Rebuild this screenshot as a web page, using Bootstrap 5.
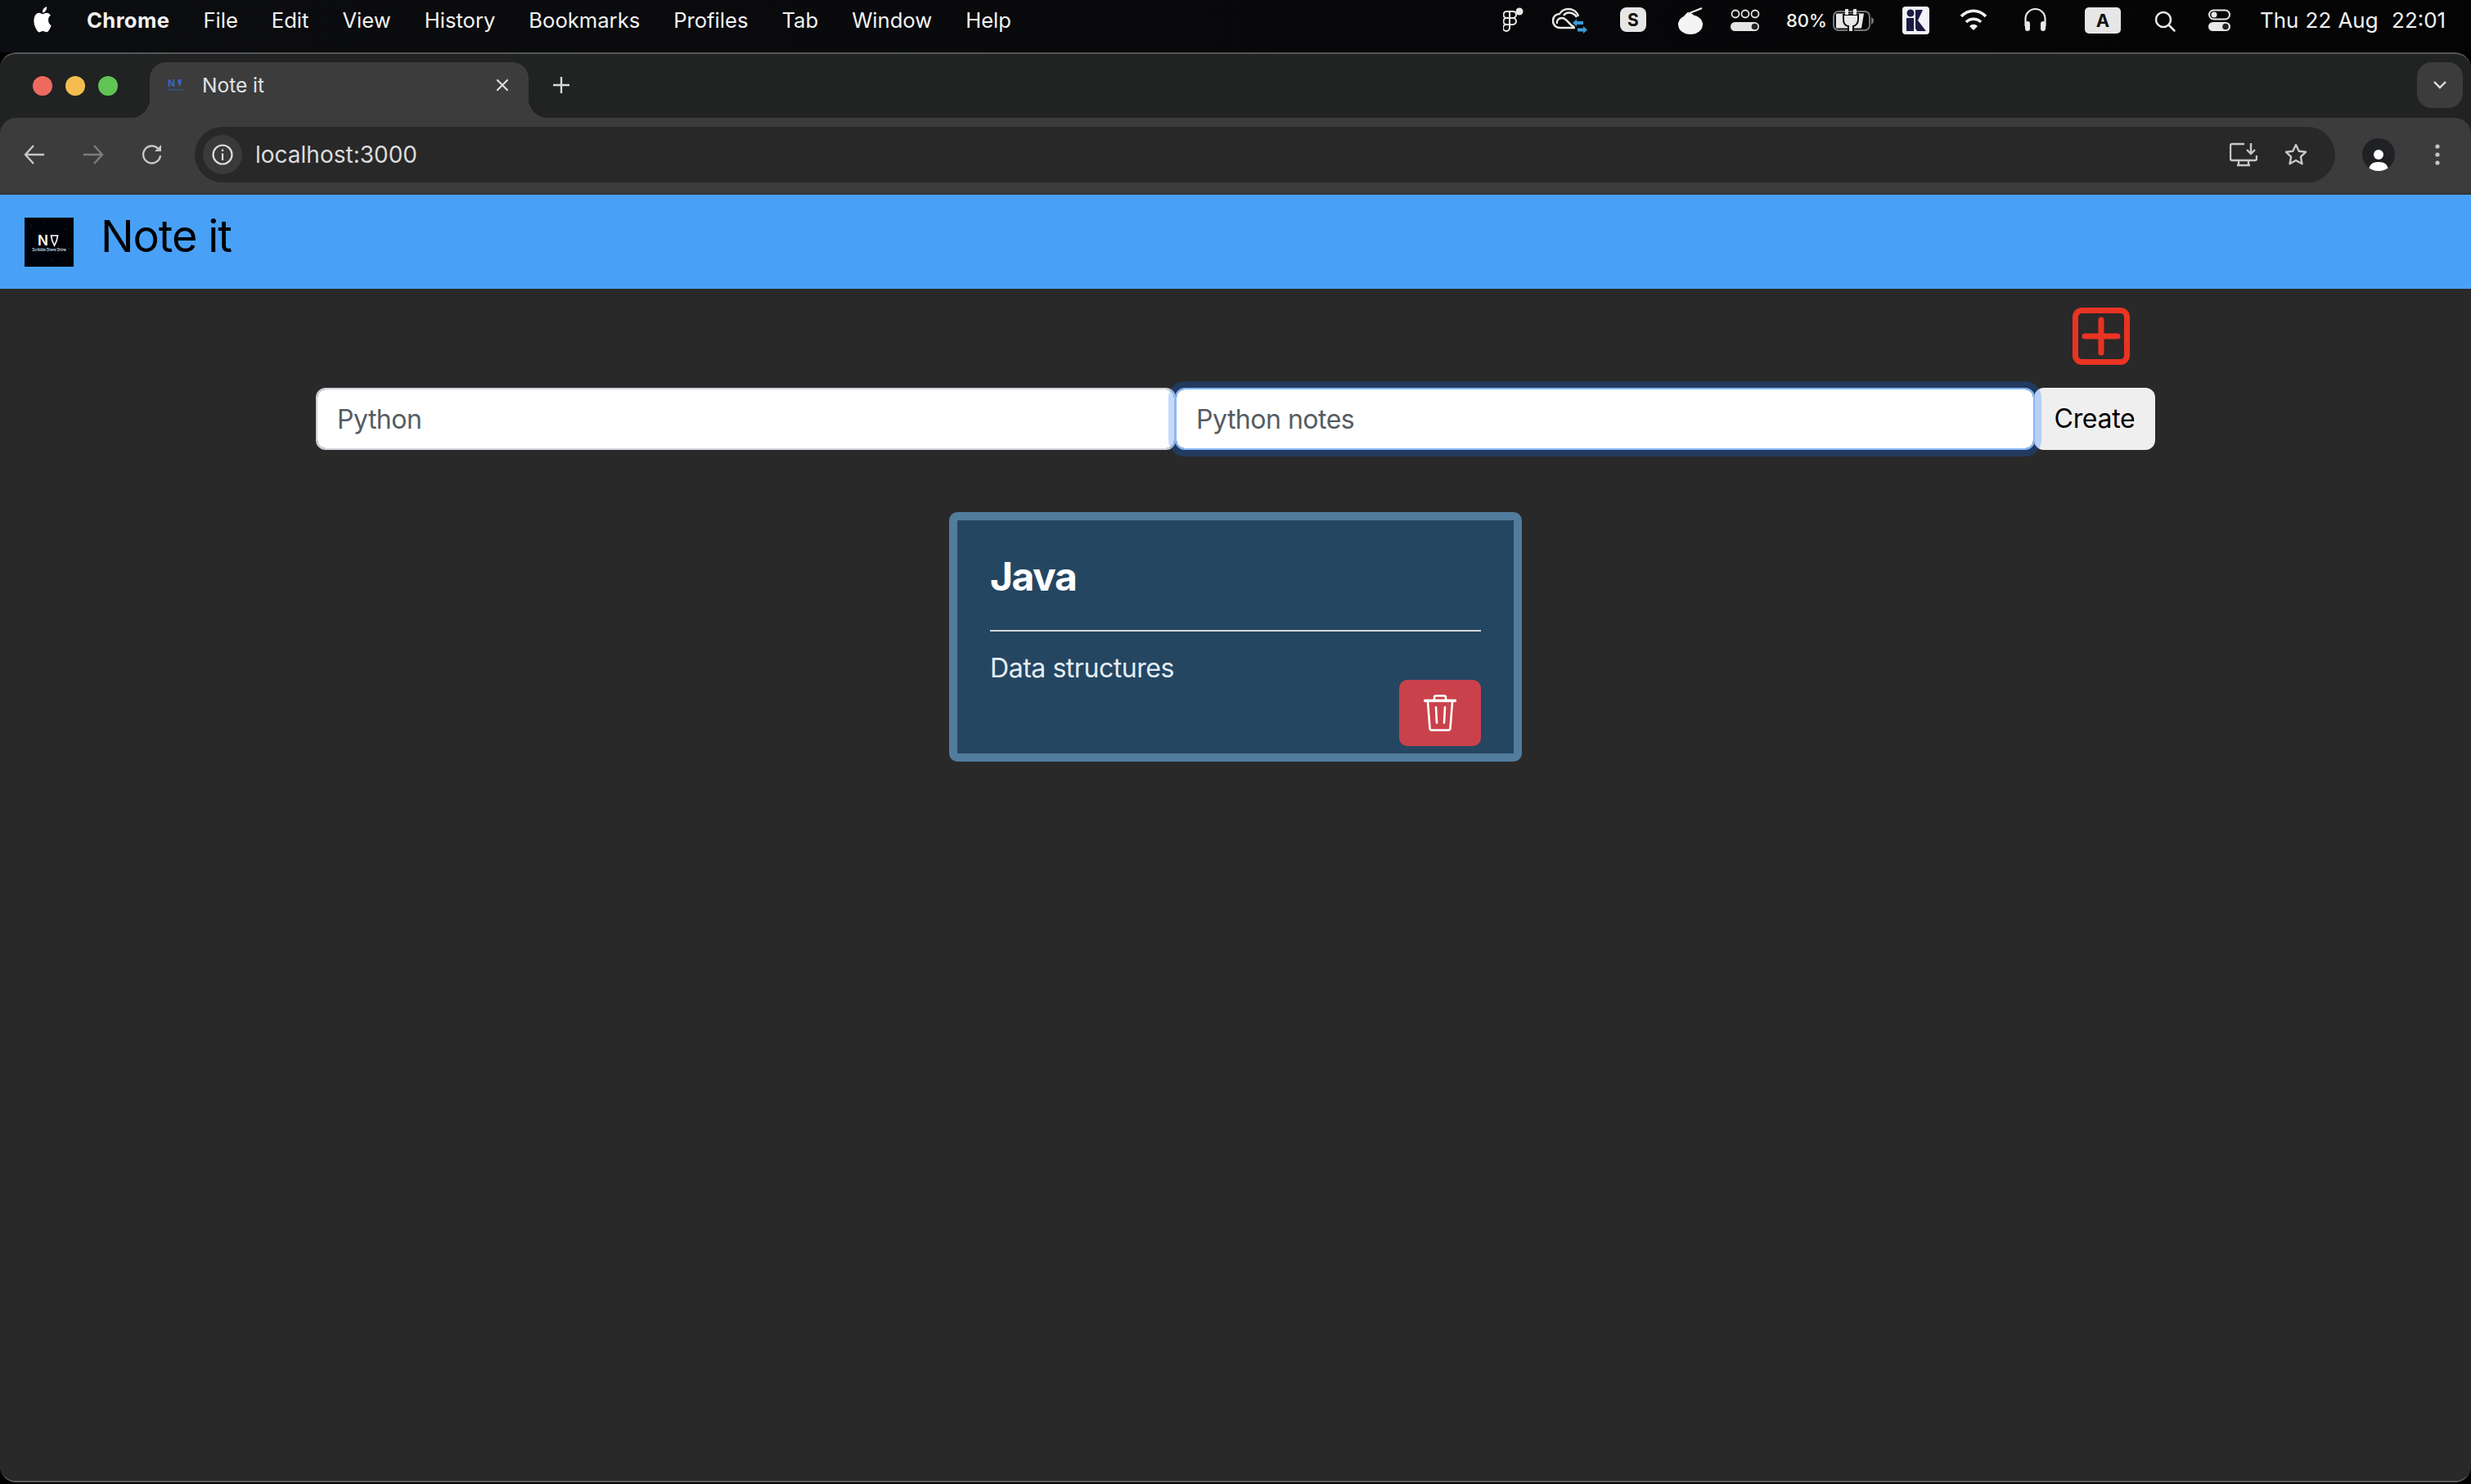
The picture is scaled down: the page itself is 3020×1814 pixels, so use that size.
<!DOCTYPE html>
<html lang="en">

<head>
  <meta charset="utf-8">
  <meta name="viewport" content="width=device-width, initial-scale=1">
  <title>Note it</title>
  <link href="https://cdn.jsdelivr.net/npm/bootstrap@5.3.0/dist/css/bootstrap.min.css" rel="stylesheet">
  <style>
    html, body { height: 100%; }
    body { background: #000; font-family: Inter, "Liberation Sans", sans-serif; overflow: hidden; }
    svg { display: block; flex-shrink: 0; }

    /* mac menu bar */
    .mac-bar { height: 64px; padding: 5px 31px 0 39px; background: linear-gradient(90deg, #0c0d10, #040405); color: #f2f2f2; font-size: 25.6px; line-height: 40px; }
    .mac-menu { gap: 41px; margin-left: 41px; }
    .mac-menu span:first-child { font-weight: 700; letter-spacing: .4px; }
    .mac-pct { width: 57px; font-size: 22px; font-weight: 500; }
    .mac-date { font-size: 25.9px; word-spacing: 1px; }

    /* browser chrome */
    .win { height: 1748px; background: #202322; border-top: 2px solid #565656; border-bottom: 2px solid #5e5e5e; border-radius: 20px; overflow: hidden; }
    .tab-strip { height: 78px; padding: 10px 10px 0 0; }
    .lights { width: 183px; gap: 16px; padding: 17px 0 0 40px; }
    .lights i { width: 24px; height: 24px; border-radius: 50%; }
    .tab-item { position: relative; width: 463px; height: 68px; padding: 0 24px 12px 22px; background: #3c3c3c; border-radius: 20px 20px 0 0; color: #e3e3e3; font-size: 24.5px; }
    .tab-item::before, .tab-item::after { content: ""; position: absolute; bottom: 0; width: 24px; height: 24px; }
    .tab-item::before { left: -24px; background: radial-gradient(circle at 0 0, transparent 24px, #3c3c3c 24.5px); }
    .tab-item::after { right: -24px; background: radial-gradient(circle at 100% 0, transparent 24px, #3c3c3c 24.5px); }
    .tab-name { margin-left: 20px; }
    .tab-new { margin: 18px 0 0 30px; }
    .tab-more { width: 56px; height: 56px; background: #3c3c3c; border-radius: 18px; }
    .tool-bar { height: 94px; padding: 0 0 2px 29px; background: #3c3c3c; border-radius: 20px 20px 0 0; border-bottom: 2px solid #333; }
    .tool-next { margin-left: 46px; }
    .omni { width: 2616px; height: 68px; margin-left: 39px; padding: 0 33px 0 10px; background: #282828; border-radius: 34px; color: #dcdcdc; font-size: 28px; }
    .omni-info { width: 48px; height: 48px; background: #3a3a3a; border-radius: 50%; }
    .omni-url { margin-left: 16px; }
    .omni-star { margin-left: 32px; }
    .profile-btn { width: 40px; height: 40px; margin-left: 33px; background: #202124; border-radius: 50%; overflow: hidden; }
    .tool-dots { margin-left: 49px; }

    /* page */
    .page-body { height: 1576px; background: #292929; }
    .top-bar { height: 115px; padding: 28px 30px 0; background: #48a1f7; align-items: flex-start; justify-content: flex-start; }
    .brand-name { margin: -11px 0 0 33px; color: #000; font-size: 54px; letter-spacing: -1.1px; line-height: 68px; }
    .note-wrap { width: 2248px; }
    .add-row { padding: 23px 31px 28px 0; }
    .note-form .form-control { height: 76px; padding: 12px 24px; border: 2px solid #ced4da; border-radius: 12px !important; font-size: 32px; letter-spacing: -.5px; }
    .note-form .form-control::placeholder { color: #555c63; opacity: 1; }
    .note-form .field-focus { position: relative; z-index: 5; border-color: #86b7fe; box-shadow: 0 0 0 8px rgba(13, 110, 253, .25); }
    .note-form .btn-make { width: 148px; padding: 12px 0; background: #efefef; border: 0; border-radius: 12px !important; color: #000; font-size: 32px; letter-spacing: -.3px; }
    .note-card { width: 700px; height: 305px; margin-top: 76px; background: #254661; border: 10px solid #527c9c; border-radius: 10px; color: #fff; }
    .note-card .card-body { padding: 40px 40px 0; }
    .note-title { margin: 0; font-size: 48px; font-weight: 700; letter-spacing: -1.5px; line-height: 58px; }
    .note-rule { margin: 36px 0 31px; border: 0; border-top: 2px solid #d4d6d8; opacity: 1; }
    .note-text { margin: 0; color: #e4eef6; font-size: 32px; letter-spacing: -.45px; line-height: 28px; }
    .btn-trash { display: flex; width: 100px; height: 81px; align-items: center; justify-content: center; padding: 0; background: #c9424b; border: 0; border-radius: 10px; }
  </style>
</head>

<body>
  <div class="mac-bar d-flex">
    <svg width="26" height="40" viewBox="0 0 24 37"><path fill="#fff" transform="translate(0 3) scale(1 1.2)" d="M12.152 6.896c-.948 0-2.415-1.078-3.96-1.04-2.04.027-3.91 1.183-4.961 3.014-2.117 3.675-.546 9.103 1.519 12.09 1.013 1.454 2.208 3.09 3.792 3.039 1.52-.065 2.09-.987 3.935-.987 1.831 0 2.35.987 3.96.948 1.637-.026 2.676-1.48 3.676-2.948 1.156-1.688 1.636-3.325 1.662-3.415-.039-.013-3.182-1.221-3.22-4.857-.026-3.04 2.48-4.494 2.597-4.559-1.429-2.09-3.623-2.324-4.39-2.376-2-.156-3.675 1.09-4.61 1.09zM15.53 3.83c.843-1.012 1.4-2.427 1.245-3.83-1.207.052-2.662.805-3.532 1.818-.78.896-1.454 2.338-1.273 3.714 1.338.104 2.715-.688 3.559-1.701"/></svg>
    <div class="mac-menu d-flex">
      <span>Chrome</span><span>File</span><span>Edit</span><span>View</span><span>History</span><span>Bookmarks</span><span>Profiles</span><span>Tab</span><span>Window</span><span>Help</span>
    </div>
    <div class="d-flex ms-auto">
      <!-- figma -->
      <svg width="60" height="40" viewBox="0 0 60 40" fill="none" stroke="#e8e8e8" stroke-width="2"><path d="M8 9H4.500a4 4 0 0 0 0 8H12a4 4 0 0 0 0-8zM8 9v16M4.500 17a4 4 0 0 0 0 8H12a4 4 0 0 0 0-8M8 25v4a4 4 0 1 1-4-4"/><circle cx="20" cy="9" r="4.500" fill="#e8e8e8" stroke="none"/></svg>
      <!-- creative cloud sync -->
      <svg width="83" height="40" viewBox="0 0 83 40" fill="none" stroke="#e8e8e8" stroke-width="2.400"><path d="M28 29H10C4 29 1 25 1 20.500 1 15 5 12 9 12 12 7 17 6 20 6c6 0 11 4 12 9"/><path d="M6 24c-1-4 2-7 6-7 6 0 9 9 15 11"/><path d="M14 14c2-3 6-4 10-3 3 1 5 3 6 5"/><path fill="#3a9bd8" stroke="none" d="M25 23l5-4.500v2.500h8v4h-8v2.500zM43 31.500L38 36v-2.500h-7v-4h7V27z"/></svg>
      <!-- s -->
      <svg width="71" height="40" viewBox="0 0 71 40"><rect x="0" y="4" width="32" height="30" rx="8" fill="#e6e6e6"/><text x="16" y="27" text-anchor="middle" font-family="Inter, sans-serif" font-size="21" font-weight="700" fill="#111">S</text></svg>
      <!-- bomb -->
      <svg width="64" height="40" viewBox="0 0 64 40"><ellipse cx="15" cy="25" rx="15" ry="12" fill="#f4f4f4"/><path d="M9 14l3-3 5 2-3 3zM14 11L29 5" stroke="#f4f4f4" stroke-width="2" fill="#f4f4f4"/></svg>
      <!-- toggle dots -->
      <svg width="68" height="40" viewBox="0 0 68 40"><g fill="none" stroke="#e6e6e6" stroke-width="1.800"><circle cx="6" cy="12" r="4.500"/><circle cx="18" cy="12" r="4.500"/><circle cx="30" cy="12" r="4.500"/></g><rect x="0" y="22" width="35" height="11" rx="5.500" fill="#e6e6e6"/><circle cx="29.500" cy="27.500" r="3.800" fill="#222"/></svg>
      <span class="mac-pct">80%</span>
      <!-- battery -->
      <svg width="85" height="40" viewBox="0 0 85 40"><rect x="1" y="9" width="44" height="23" rx="6" fill="none" stroke="#777" stroke-width="2"/><path d="M47 16c2 1 3 2 3 4s-1 4-3 5z" fill="#777"/><path d="M5 11.500h33l-3 18H5a1 1 0 0 1-1-1v-16z" fill="#e8e8e8"/><path d="M13 13h18v6c0 5-4 8-6 8v7h-6v-7c-3 0-6-3-6-8z" fill="#e8e8e8" stroke="#0a0a0a" stroke-width="2"/><path d="M15 6h4v7h-4zM25 6h4v7h-4z" fill="#e8e8e8"/></svg>
      <!-- k -->
      <svg width="70" height="40" viewBox="0 0 70 40"><rect x="0" y="3" width="33" height="34" rx="4" fill="#f3f3f8"/><circle cx="10" cy="11" r="4.500" fill="#1b1b42"/><path d="M5 17h9v16H5zM16 7h9l-6 13 10 13H18l-2-3z" fill="#1b1b42"/></svg>
      <!-- wifi -->
      <svg width="78" height="40" viewBox="0 0 78 40" fill="none" stroke="#efefef" stroke-width="3.600"><path d="M2 15c9-9 21-9 30 0M8 22c5-5 13-5 18 0"/><path d="M12 27c3-3 7-3 10 0l-5 5z" fill="#efefef" stroke="none"/></svg>
      <!-- headphones -->
      <svg width="75" height="40" viewBox="0 0 75 40" fill="none" stroke="#e8e8e8" stroke-width="2.200"><path d="M2.500 27V18a12 12 0 0 1 24 0v9"/><rect x="2" y="21" width="6" height="12" rx="3" fill="#e8e8e8" stroke="none"/><rect x="21" y="21" width="6" height="12" rx="3" fill="#e8e8e8" stroke="none"/></svg>
      <!-- input source -->
      <svg width="85" height="40" viewBox="0 0 85 40"><rect x="0" y="4" width="44" height="32" rx="5" fill="#e6e6e6"/><text x="22" y="28" text-anchor="middle" font-family="Inter, sans-serif" font-size="22" font-weight="700" fill="#111">A</text></svg>
      <!-- search -->
      <svg width="66" height="40" viewBox="0 0 66 40" fill="none" stroke="#e8e8e8" stroke-width="2.500"><circle cx="11" cy="19" r="9"/><path d="M17.500 25.500l7 7" stroke-linecap="round"/></svg>
      <!-- control center -->
      <svg width="63" height="40" viewBox="0 0 63 40"><rect x="1" y="7.500" width="25" height="11" rx="5.500" fill="none" stroke="#e8e8e8" stroke-width="2"/><circle cx="7" cy="13" r="3.500" fill="#e8e8e8"/><rect x="0" y="22" width="27" height="11" rx="5.500" fill="#e8e8e8"/><circle cx="21" cy="27.500" r="3.800" fill="#222"/></svg>
      <span class="mac-date">Thu 22 Aug&nbsp; 22:01</span>
    </div>
  </div>

  <div class="win">
    <div class="tab-strip d-flex">
      <div class="lights d-flex">
        <i class="d-block" style="background:#ee6a5f"></i><i class="d-block" style="background:#f5bd4f"></i><i class="d-block" style="background:#61c454"></i>
      </div>
      <div class="tab-item d-flex align-items-center">
        <svg width="22" height="20" viewBox="0 0 22 20"><text x="0" y="12" font-family="Inter, sans-serif" font-size="12" font-weight="700" fill="#3466c0">N</text><path d="M12 3h5l-1 6-1.500 3-1.500-3z" fill="#3466c0"/><text x="0" y="17" font-family="Inter, sans-serif" font-size="3" fill="#3466c0">Scribble Share</text></svg>
        <span class="tab-name">Note it</span>
        <svg class="ms-auto" width="16" height="16" viewBox="0 0 16 16" stroke="#dcdcdc" stroke-width="2.200" stroke-linecap="round"><path d="M2 2l12 12M14 2L2 14"/></svg>
      </div>
      <svg class="tab-new" width="20" height="20" viewBox="0 0 20 20" stroke="#d8d8d8" stroke-width="2.400"><path d="M10 0v20M0 10h20"/></svg>
      <div class="tab-more d-flex align-items-center justify-content-center ms-auto">
        <svg width="16" height="10" viewBox="0 0 16 10" fill="none" stroke="#e0e0e0" stroke-width="2.400"><path d="M1 1l7 7 7-7"/></svg>
      </div>
    </div>

    <div class="tool-bar d-flex align-items-center">
      <svg width="26" height="26" viewBox="0 0 26 26" fill="none" stroke="#c7c7c7" stroke-width="2.400"><path d="M25 13H2M12 2L2 13l10 11"/></svg>
      <svg class="tool-next" width="26" height="26" viewBox="0 0 26 26" fill="none" stroke="#7d7d7d" stroke-width="2.400"><path d="M1 13h23M14 2l10 11-10 11"/></svg>
      <svg class="tool-next" width="26" height="26" viewBox="0 0 26 26" fill="none" stroke="#c7c7c7" stroke-width="2.400"><path d="M23 14a10.500 10.500 0 1 1-3-8.500L23 8"/><path d="M24 1v8h-8" fill="#c7c7c7" stroke="none"/></svg>
      <div class="omni d-flex align-items-center">
        <div class="omni-info d-flex align-items-center justify-content-center">
          <svg width="26" height="26" viewBox="0 0 26 26" fill="none" stroke="#dcdcdc" stroke-width="2.200"><circle cx="13" cy="13" r="11.500"/><path d="M13 11.500V20M13 6.500v2.500"/></svg>
        </div>
        <span class="omni-url">localhost:3000</span>
        <svg class="ms-auto" width="34" height="30" viewBox="0 0 34 30" fill="none" stroke="#c7c7c7" stroke-width="2.400"><path d="M18 2H3a2 2 0 0 0-2 2v16a2 2 0 0 0 2 2h28a2 2 0 0 0 2-2v-4M11 23v5h12v-5M9 28h16"/><path d="M26 1v12M21 9l5 5 5-5"/></svg>
        <svg class="omni-star" width="30" height="30" viewBox="0 0 30 30" fill="none" stroke="#c7c7c7" stroke-width="2.400" stroke-linejoin="round"><path d="M15 3l3.700 7.800 8.300 1-6.100 5.900 1.600 8.500L15 22l-7.500 4.200 1.600-8.500L3 11.800l8.300-1z"/></svg>
      </div>
      <div class="profile-btn d-flex flex-column align-items-center justify-content-end">
        <svg width="26" height="30" viewBox="0 0 26 30" fill="#fff"><circle cx="13" cy="10" r="6"/><path d="M1 30c0-8 5-11 12-11s12 3 12 11z"/></svg>
      </div>
      <svg class="tool-dots" width="6" height="26" viewBox="0 0 6 26" fill="#c7c7c7"><circle cx="3" cy="3" r="2.600"/><circle cx="3" cy="13" r="2.600"/><circle cx="3" cy="23" r="2.600"/></svg>
    </div>

    <div class="page-body">
      <nav class="navbar top-bar">
        <svg width="60" height="60" viewBox="0 0 60 60">
          <rect width="60" height="60" fill="#02030a"/>
          <g fill="#2c4a70"><circle cx="8" cy="10" r=".6"/><circle cx="25" cy="6" r=".6"/><circle cx="50" cy="14" r=".6"/><circle cx="12" cy="44" r=".6"/><circle cx="46" cy="50" r=".6"/><circle cx="34" cy="52" r=".6"/><circle cx="54" cy="38" r=".6"/></g>
          <text x="16" y="34" font-family="Inter, sans-serif" font-size="17" font-weight="600" fill="#fff">N</text>
          <path d="M32.500 22h8l-1.200 6-2.800 6-2.800-6z" fill="none" stroke="#fff" stroke-width="1.600"/>
          <text x="9" y="41" font-family="Inter, sans-serif" font-size="5" fill="#dfe6ee" textLength="42">Scribble Share Shine</text>
        </svg>
        <span class="brand-name">Note it</span>
      </nav>

      <div class="note-wrap mx-auto">
        <div class="add-row d-flex justify-content-end">
          <svg width="70" height="70" viewBox="0 0 70 70" fill="none" stroke="#ea3323" stroke-width="7" stroke-linecap="round"><rect x="3.500" y="3.500" width="63" height="63" rx="8"/><path d="M35 15v40M15 35h40"/></svg>
        </div>
        <form class="note-form input-group">
          <input class="form-control" type="text" placeholder="Python">
          <input class="form-control field-focus" type="text" placeholder="Python notes">
          <button class="btn btn-make" type="button">Create</button>
        </form>
        <div class="card note-card mx-auto">
          <div class="card-body">
            <h2 class="note-title">Java</h2>
            <hr class="note-rule">
            <p class="note-text">Data structures</p>
            <button class="btn btn-trash ms-auto" type="button">
              <svg width="40" height="45" viewBox="0 0 40 45" fill="none" stroke="#fff" stroke-width="2.600" stroke-linecap="round"><path d="M1.500 7.500h37" stroke-width="3.400"/><path d="M13 7V3.500a2 2 0 0 1 2-2h10a2 2 0 0 1 2 2V7"/><path d="M5 9l2.500 32a2.500 2.500 0 0 0 2.500 2.500h20a2.500 2.500 0 0 0 2.500-2.500L35 9"/><path d="M15 15.500l1 19M26 15.500l-1 19"/></svg>
            </button>
          </div>
        </div>
      </div>
    </div>
  </div>

  <script src="https://cdn.jsdelivr.net/npm/bootstrap@5.3.0/dist/js/bootstrap.bundle.min.js"></script>
</body>

</html>
